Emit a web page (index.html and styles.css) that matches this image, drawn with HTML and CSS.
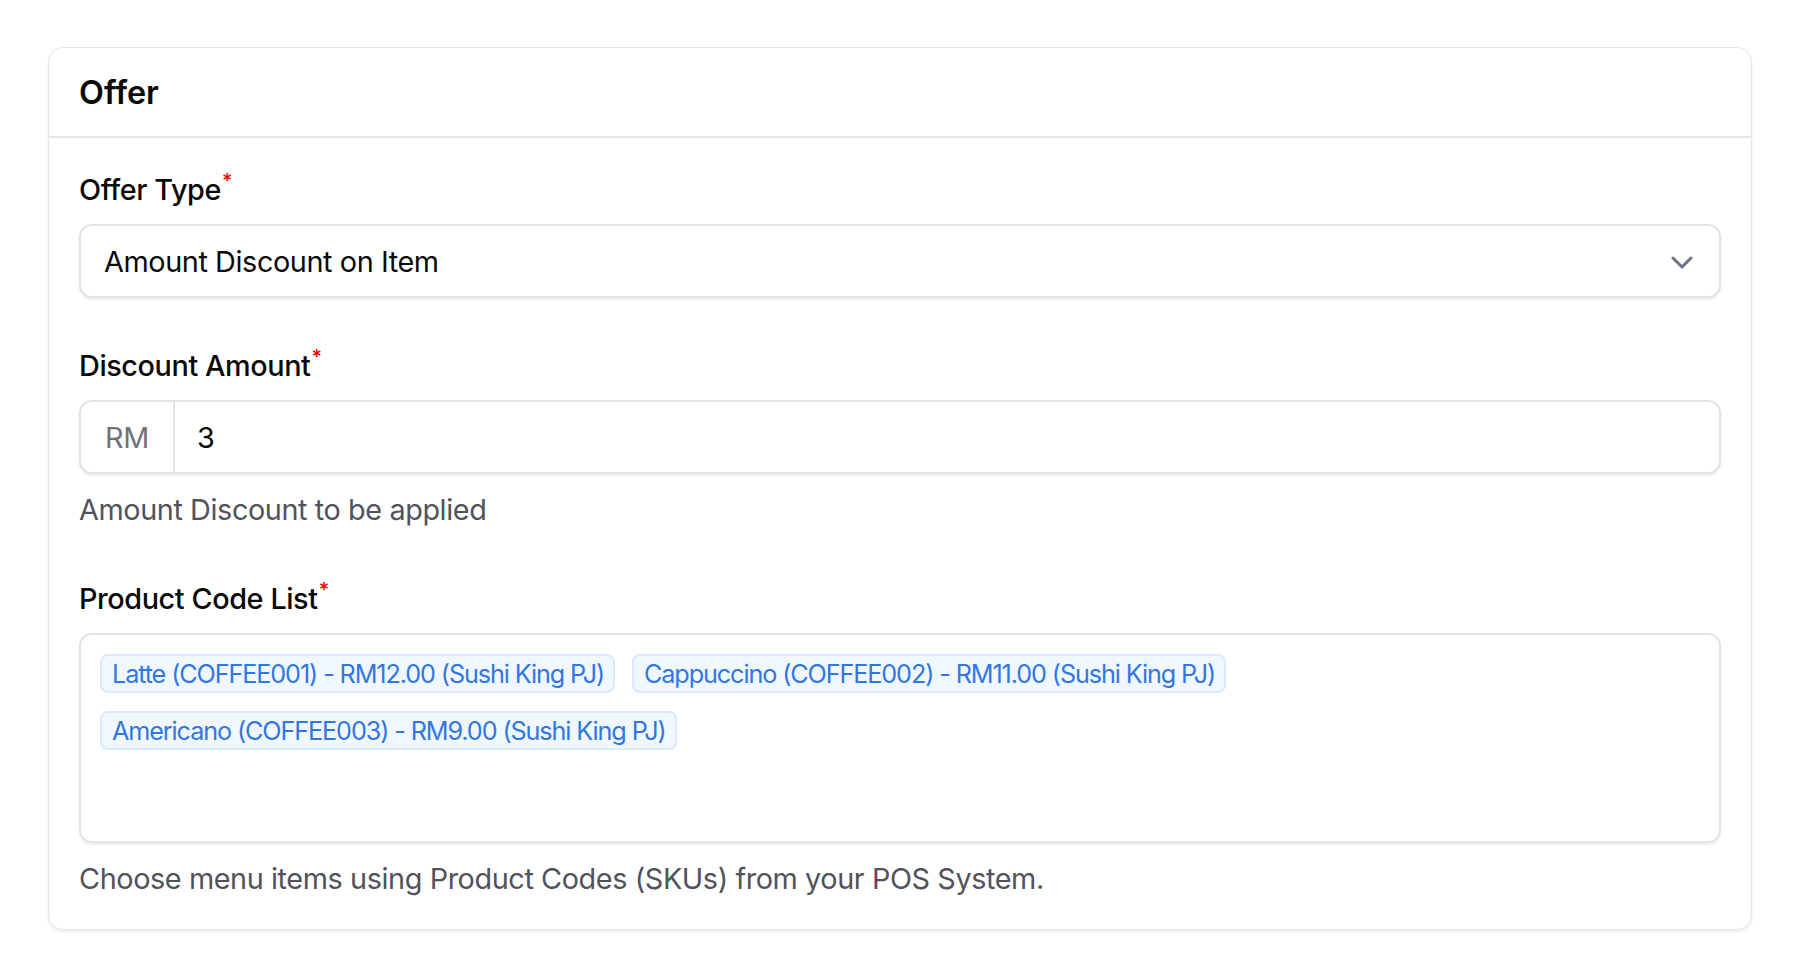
FILE: index.html
```html
<!DOCTYPE html>
<html lang="en">
<head>
<meta charset="utf-8">
<title>Offer</title>
<link rel="stylesheet" href="styles.css">
</head>
<body>
<div class="card">
  <div class="card-header"><h2 class="card-title">Offer</h2></div>
  <div class="card-body">
    <div class="field">
      <label class="label">Offer Type<sup class="req">*</sup></label>
      <div class="select">
        <span class="select-value">Amount Discount on Item</span>
        <svg class="chevron" width="22" height="13" viewBox="0 0 22 13"><path d="M2 2 L11 11 L20 2" fill="none" stroke="#6b7280" stroke-width="3" stroke-linecap="round" stroke-linejoin="round"/></svg>
      </div>
    </div>
    <div class="field">
      <label class="label">Discount Amount<sup class="req">*</sup></label>
      <div class="input-group">
        <span class="addon">RM</span>
        <span class="input-value">3</span>
      </div>
      <p class="help">Amount Discount to be applied</p>
    </div>
    <div class="field">
      <label class="label">Product Code List<sup class="req">*</sup></label>
      <div class="tagbox">
        <span class="tag">Latte (COFFEE001) - RM12.00 (Sushi King PJ)</span>
        <span class="tag">Cappuccino (COFFEE002) - RM11.00 (Sushi King PJ)</span>
        <span class="tag">Americano (COFFEE003) - RM9.00 (Sushi King PJ)</span>
      </div>
      <p class="help">Choose menu items using Product Codes (SKUs) from your POS System.</p>
    </div>
  </div>
</div>
</body>
</html>
```
FILE: styles.css
```css
* { box-sizing: border-box; }
html, body { margin: 0; background: #ffffff; }
body {
  padding: 47px 48px;
  font-family: Inter, "Noto Sans", "Liberation Sans", sans-serif;
  color: #0a0a0a;
}
.card {
  border: 1px solid #e5e5e5;
  border-radius: 15px;
  background: #fff;
  box-shadow: 0 2px 3px rgba(0,0,0,0.07);
  height: 883px;
}
.card-header {
  height: 90px;
  border-bottom: 2px solid #e5e5e5;
  padding: 0 30px;
  display: flex;
  align-items: center;
}
.card-title {
  margin: 0;
  font-size: 32.4px;
  font-weight: 600;
  line-height: 48px;
  padding-top: 2px;
}
.card-body {
  padding: 30px 30px 0 30px;
  display: flex;
  flex-direction: column;
}
.field { display: flex; flex-direction: column; }
.field + .field { margin-top: 46px; }
.label {
  font-size: 28.8px;
  letter-spacing: -0.4px;
  line-height: 43px;
  font-weight: 500;
  margin-bottom: 13px;
}
.req {
  color: #ee0000;
  font-size: 20px;
  line-height: 0;
  vertical-align: 0;
  position: relative;
  top: -12px;
  margin-left: 1px;
}
.select {
  height: 74px;
  border: 2px solid #e3e3e3;
  border-radius: 13px;
  box-shadow: 0 2px 2px rgba(0,0,0,0.08);
  display: flex;
  align-items: center;
  justify-content: space-between;
  padding: 0 26px 0 23px;
  font-size: 28.8px;
  letter-spacing: -0.4px;
}
.chevron { display: block; margin-top: 2px; }
.input-group {
  height: 74px;
  border: 2px solid #e3e3e3;
  border-radius: 13px;
  box-shadow: 0 2px 2px rgba(0,0,0,0.08);
  display: flex;
  align-items: stretch;
  font-size: 28.8px;
  letter-spacing: -0.4px;
}
.addon {
  width: 94px;
  border-right: 2px solid #e3e3e3;
  color: #71717a;
  display: flex;
  align-items: center;
  padding-left: 24px;
}
.input-value {
  display: flex;
  align-items: center;
  padding-left: 22px;
}
.help {
  margin: 14px 0 0 0;
  font-size: 28.8px;
  letter-spacing: -0.4px;
  line-height: 43px;
  color: #52525b;
}
.tagbox {
  height: 210px;
  border: 2px solid #e3e3e3;
  border-radius: 13px;
  box-shadow: 0 2px 2px rgba(0,0,0,0.08);
  padding: 19px 19px;
  display: flex;
  flex-wrap: wrap;
  align-content: flex-start;
  gap: 18px 17px;
}
.tag {
  height: 39px;
  display: inline-flex;
  align-items: center;
  padding: 0 9px 0 10px;
  border: 2px solid #dbe8fd;
  border-radius: 8px;
  background: #f0f7ff;
  color: #3277e0;
  font-size: 25.2px;
  letter-spacing: -1.1px;
  white-space: nowrap;
}
```
